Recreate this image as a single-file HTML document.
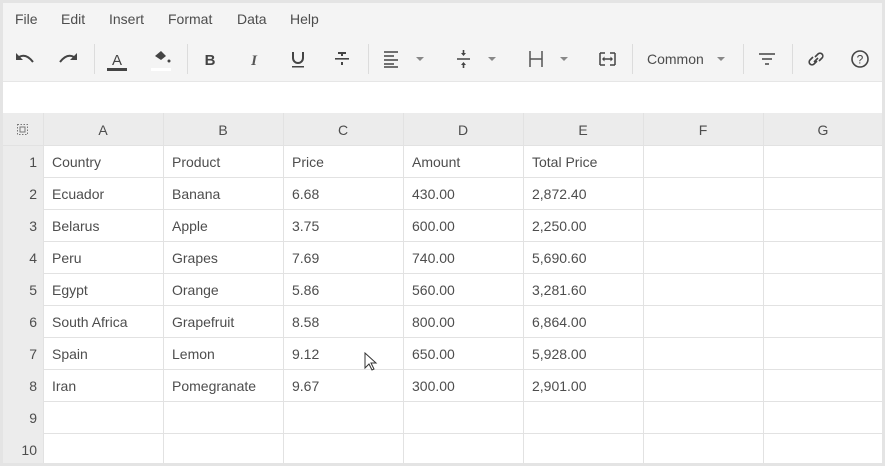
<!DOCTYPE html>
<html><head><meta charset="utf-8"><style>
*{margin:0;padding:0;box-sizing:border-box}
body{width:885px;height:466px;background:#e4e4e4;font-family:"Liberation Sans",sans-serif;color:#4d4d4d;position:relative;overflow:hidden}
.a{position:absolute}
#tb{left:3px;top:3px;width:879px;height:78px;background:#f4f4f4}
#fb{left:3px;top:81px;width:879px;height:32px;background:#fff;border-top:1px solid #e6e6e6}
.m{top:11px;font-size:14px;color:#4d4d4d}
.sep{top:44px;width:1px;height:30px;background:#dcdcdc}
.car{top:57px;width:0;height:0;border-left:4px solid transparent;border-right:4px solid transparent;border-top:4px solid #888}
#grid{left:3px;top:113px;width:879px;height:350px;background:#fff}
.hd{background:#ececec}
.cell{font-size:14px;color:#4d4d4d;line-height:32px}
.vl{width:1px;background:#e2e2e2}
.hl{height:1px;background:#e2e2e2}
</style></head><body>
<div class="a" id="tb"></div>
<div class="a m" style="left:15px">File</div>
<div class="a m" style="left:61px">Edit</div>
<div class="a m" style="left:109px">Insert</div>
<div class="a m" style="left:168px">Format</div>
<div class="a m" style="left:237px">Data</div>
<div class="a m" style="left:290px">Help</div>

<svg class="a" style="left:0;top:40px" width="885" height="40" viewBox="0 40 885 40">
<g fill="none" stroke="#444" stroke-width="2">
<path d="M19 57 Q26 53 33 62"/>
<path d="M74 57 Q67 53 60 62"/>
</g>
<path d="M16 53 v7 h7z" fill="#444"/>
<path d="M77 53 v7 h-7z" fill="#444"/>
<text x="117" y="65" font-size="15" text-anchor="middle" fill="#444" font-family="Liberation Sans">A</text>
<rect x="107" y="68" width="20" height="3" fill="#444"/>
<path d="M155 56 l6 -5 l5 5 l-5 4z" fill="#444"/><circle cx="169" cy="61" r="1.5" fill="#444"/>
<rect x="151" y="68" width="20" height="3" fill="#fff"/>
<text x="210" y="65" font-size="15" font-weight="bold" text-anchor="middle" fill="#444" font-family="Liberation Sans">B</text>
<text x="254" y="65" font-size="15" font-weight="bold" font-style="italic" text-anchor="middle" fill="#555" font-family="Liberation Serif">I</text>
<path d="M293 52 v6 a5 5 0 0 0 10 0 v-6" fill="none" stroke="#444" stroke-width="2"/><rect x="292" y="66" width="12" height="1.5" fill="#444"/>
<rect x="335" y="58" width="14" height="1.6" fill="#444"/><path d="M338 53 h8 M342 53 v3 M342 62 v3" stroke="#444" stroke-width="2"/>
<path d="M384 52 h14 M384 56 h10 M384 60 h14 M384 64 h10 M384 67 h14" stroke="#444" stroke-width="1.4"/>
<path d="M457 59 h13 M463.5 50 v5 M463.5 63 v5" stroke="#444" stroke-width="1.6"/><path d="M461 53 l2.5 3 l2.5 -3z M461 65 l2.5 -3 l2.5 3z" fill="#444"/>
<path d="M530 51 v16 M542 51 v16 M530 59 h12" stroke="#555" stroke-width="1.5"/>
<path d="M600 53 h5 M610 53 h5 M600 53 v12 M615 53 v12 M600 65 h5 M610 65 h5 M603 59 h9" stroke="#444" stroke-width="1.5" fill="none"/>
<path d="M602 59 l2.5 -2.5 v5z M613 59 l-2.5 -2.5 v5z" fill="#444"/>
<text x="647" y="64" font-size="14" fill="#4d4d4d" font-family="Liberation Sans">Common</text>
<path d="M759 54 h16 M762 59 h10 M765 64 h4" stroke="#444" stroke-width="1.6"/>
<path d="M813 57 l-3 3 a2.8 2.8 0 0 0 4 4 l3 -3 M819 61 l3 -3 a2.8 2.8 0 0 0 -4 -4 l-3 3 M814 62 l4 -4" stroke="#444" stroke-width="1.6" fill="none"/>
<circle cx="860" cy="59" r="8" fill="none" stroke="#444" stroke-width="1.6"/>
<text x="860" y="63.5" font-size="12" text-anchor="middle" fill="#444" font-family="Liberation Sans">?</text>
</svg>
<div class="a car" style="left:416px"></div>
<div class="a car" style="left:488px"></div>
<div class="a car" style="left:560px"></div>
<div class="a car" style="left:717px"></div>
<div class="a sep" style="left:94px"></div>
<div class="a sep" style="left:187px"></div>
<div class="a sep" style="left:368px"></div>
<div class="a sep" style="left:632px"></div>
<div class="a sep" style="left:743px"></div>
<div class="a sep" style="left:792px"></div>

<div class="a" id="fb"></div>
<div class="a" id="grid"></div>
<div class="a hd" style="left:3px;top:113px;width:879px;height:33px"></div>
<div class="a hd" style="left:3px;top:113px;width:40px;height:350px"></div>
<svg class="a" style="left:16px;top:123px" width="14" height="14"><rect x="1.5" y="1.5" width="10" height="10" fill="none" stroke="#777" stroke-dasharray="1.5 1.5"/><rect x="4" y="4" width="5" height="5" fill="none" stroke="#777"/></svg>

<div class="a vl" style="left:43px;top:113px;height:350px"></div>
<div class="a vl" style="left:163px;top:113px;height:350px"></div>
<div class="a vl" style="left:283px;top:113px;height:350px"></div>
<div class="a vl" style="left:403px;top:113px;height:350px"></div>
<div class="a vl" style="left:523px;top:113px;height:350px"></div>
<div class="a vl" style="left:643px;top:113px;height:350px"></div>
<div class="a vl" style="left:763px;top:113px;height:350px"></div>
<div class="a hl" style="left:3px;top:145px;width:879px"></div>
<div class="a hl" style="left:43px;top:177px;width:839px"></div>
<div class="a hl" style="left:43px;top:209px;width:839px"></div>
<div class="a hl" style="left:43px;top:241px;width:839px"></div>
<div class="a hl" style="left:43px;top:273px;width:839px"></div>
<div class="a hl" style="left:43px;top:305px;width:839px"></div>
<div class="a hl" style="left:43px;top:337px;width:839px"></div>
<div class="a hl" style="left:43px;top:369px;width:839px"></div>
<div class="a hl" style="left:43px;top:401px;width:839px"></div>
<div class="a hl" style="left:43px;top:433px;width:839px"></div>

<div class="a cell" style="left:43px;top:114px;width:120px;text-align:center">A</div>
<div class="a cell" style="left:163px;top:114px;width:120px;text-align:center">B</div>
<div class="a cell" style="left:283px;top:114px;width:120px;text-align:center">C</div>
<div class="a cell" style="left:403px;top:114px;width:120px;text-align:center">D</div>
<div class="a cell" style="left:523px;top:114px;width:120px;text-align:center">E</div>
<div class="a cell" style="left:643px;top:114px;width:120px;text-align:center">F</div>
<div class="a cell" style="left:763px;top:114px;width:120px;text-align:center">G</div>

<div class="a cell" style="left:3px;top:146px;width:34px;text-align:right">1</div>
<div class="a cell" style="left:3px;top:178px;width:34px;text-align:right">2</div>
<div class="a cell" style="left:3px;top:210px;width:34px;text-align:right">3</div>
<div class="a cell" style="left:3px;top:242px;width:34px;text-align:right">4</div>
<div class="a cell" style="left:3px;top:274px;width:34px;text-align:right">5</div>
<div class="a cell" style="left:3px;top:306px;width:34px;text-align:right">6</div>
<div class="a cell" style="left:3px;top:338px;width:34px;text-align:right">7</div>
<div class="a cell" style="left:3px;top:370px;width:34px;text-align:right">8</div>
<div class="a cell" style="left:3px;top:402px;width:34px;text-align:right">9</div>
<div class="a cell" style="left:3px;top:434px;width:34px;text-align:right">10</div>

<div class="a cell" style="left:52px;top:146px">Country</div><div class="a cell" style="left:172px;top:146px">Product</div><div class="a cell" style="left:292px;top:146px">Price</div><div class="a cell" style="left:412px;top:146px">Amount</div><div class="a cell" style="left:532px;top:146px">Total Price</div>
<div class="a cell" style="left:52px;top:178px">Ecuador</div><div class="a cell" style="left:172px;top:178px">Banana</div><div class="a cell" style="left:292px;top:178px">6.68</div><div class="a cell" style="left:412px;top:178px">430.00</div><div class="a cell" style="left:532px;top:178px">2,872.40</div>
<div class="a cell" style="left:52px;top:210px">Belarus</div><div class="a cell" style="left:172px;top:210px">Apple</div><div class="a cell" style="left:292px;top:210px">3.75</div><div class="a cell" style="left:412px;top:210px">600.00</div><div class="a cell" style="left:532px;top:210px">2,250.00</div>
<div class="a cell" style="left:52px;top:242px">Peru</div><div class="a cell" style="left:172px;top:242px">Grapes</div><div class="a cell" style="left:292px;top:242px">7.69</div><div class="a cell" style="left:412px;top:242px">740.00</div><div class="a cell" style="left:532px;top:242px">5,690.60</div>
<div class="a cell" style="left:52px;top:274px">Egypt</div><div class="a cell" style="left:172px;top:274px">Orange</div><div class="a cell" style="left:292px;top:274px">5.86</div><div class="a cell" style="left:412px;top:274px">560.00</div><div class="a cell" style="left:532px;top:274px">3,281.60</div>
<div class="a cell" style="left:52px;top:306px">South Africa</div><div class="a cell" style="left:172px;top:306px">Grapefruit</div><div class="a cell" style="left:292px;top:306px">8.58</div><div class="a cell" style="left:412px;top:306px">800.00</div><div class="a cell" style="left:532px;top:306px">6,864.00</div>
<div class="a cell" style="left:52px;top:338px">Spain</div><div class="a cell" style="left:172px;top:338px">Lemon</div><div class="a cell" style="left:292px;top:338px">9.12</div><div class="a cell" style="left:412px;top:338px">650.00</div><div class="a cell" style="left:532px;top:338px">5,928.00</div>
<div class="a cell" style="left:52px;top:370px">Iran</div><div class="a cell" style="left:172px;top:370px">Pomegranate</div><div class="a cell" style="left:292px;top:370px">9.67</div><div class="a cell" style="left:412px;top:370px">300.00</div><div class="a cell" style="left:532px;top:370px">2,901.00</div>

<svg class="a" style="left:364px;top:352px" width="14" height="20"><path d="M1 1 v15 l4 -4 l3 6 l2 -1 l-3 -6 h5z" fill="#fff" stroke="#333" stroke-width="1"/></svg>
</body></html>
